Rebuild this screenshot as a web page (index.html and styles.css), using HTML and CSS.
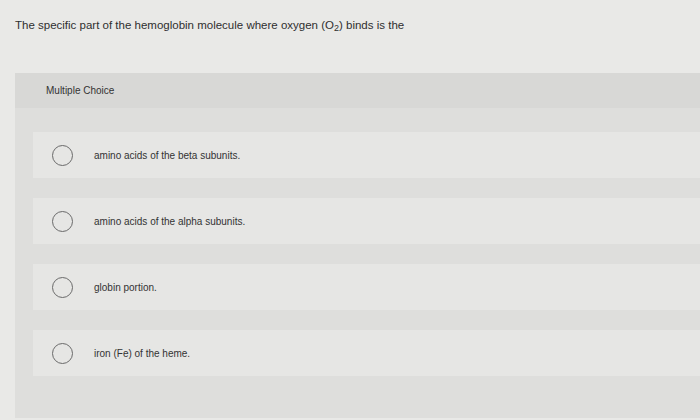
FILE: index.html
```html
<!DOCTYPE html>
<html>
<head>
<meta charset="utf-8">
<link rel="stylesheet" href="styles.css">
</head>
<body>
<div class="question">The specific part of the hemoglobin molecule where oxygen (O<sub>2</sub>) binds is the</div>
<div class="panel">
  <div class="panel-head">Multiple Choice</div>
  <div class="options">
    <div class="option"><span class="radio"></span><span class="label">amino acids of the beta subunits.</span></div>
    <div class="option"><span class="radio"></span><span class="label">amino acids of the alpha subunits.</span></div>
    <div class="option"><span class="radio"></span><span class="label">globin portion.</span></div>
    <div class="option"><span class="radio"></span><span class="label">iron (Fe) of the heme.</span></div>
  </div>
</div>
</body>
</html>
```

FILE: styles.css
```css
html, body {
  margin: 0;
  padding: 0;
  background: #e9e9e7;
  font-family: "Liberation Sans", Arial, sans-serif;
  color: #353535;
  overflow: hidden;
}
.question {
  height: 73px;
  box-sizing: border-box;
  padding: 17px 0 0 15px;
  font-size: 11.5px;
  line-height: 16px;
  color: #2f2f2f;
}
.question sub {
  font-size: 9px;
  line-height: 0;
  vertical-align: -2px;
}
.panel {
  margin-left: 15px;
  height: 345px;
  background: #dededc;
}
.panel-head {
  height: 35px;
  box-sizing: border-box;
  padding: 12px 0 0 31px;
  font-size: 10px;
  line-height: 12px;
  background: #d8d8d6;
  color: #333;
}
.options {
  display: flex;
  flex-direction: column;
  gap: 20px;
  padding: 24px 0 0 18px;
}
.option {
  height: 46px;
  display: flex;
  align-items: center;
  padding-left: 19px;
  background: #e6e6e4;
}
.radio {
  width: 19px;
  height: 19px;
  border: 1.5px solid #6a6a6a;
  border-radius: 50%;
  flex: none;
}
.label {
  margin-left: 21px;
  font-size: 10px;
  color: #333;
}
```
